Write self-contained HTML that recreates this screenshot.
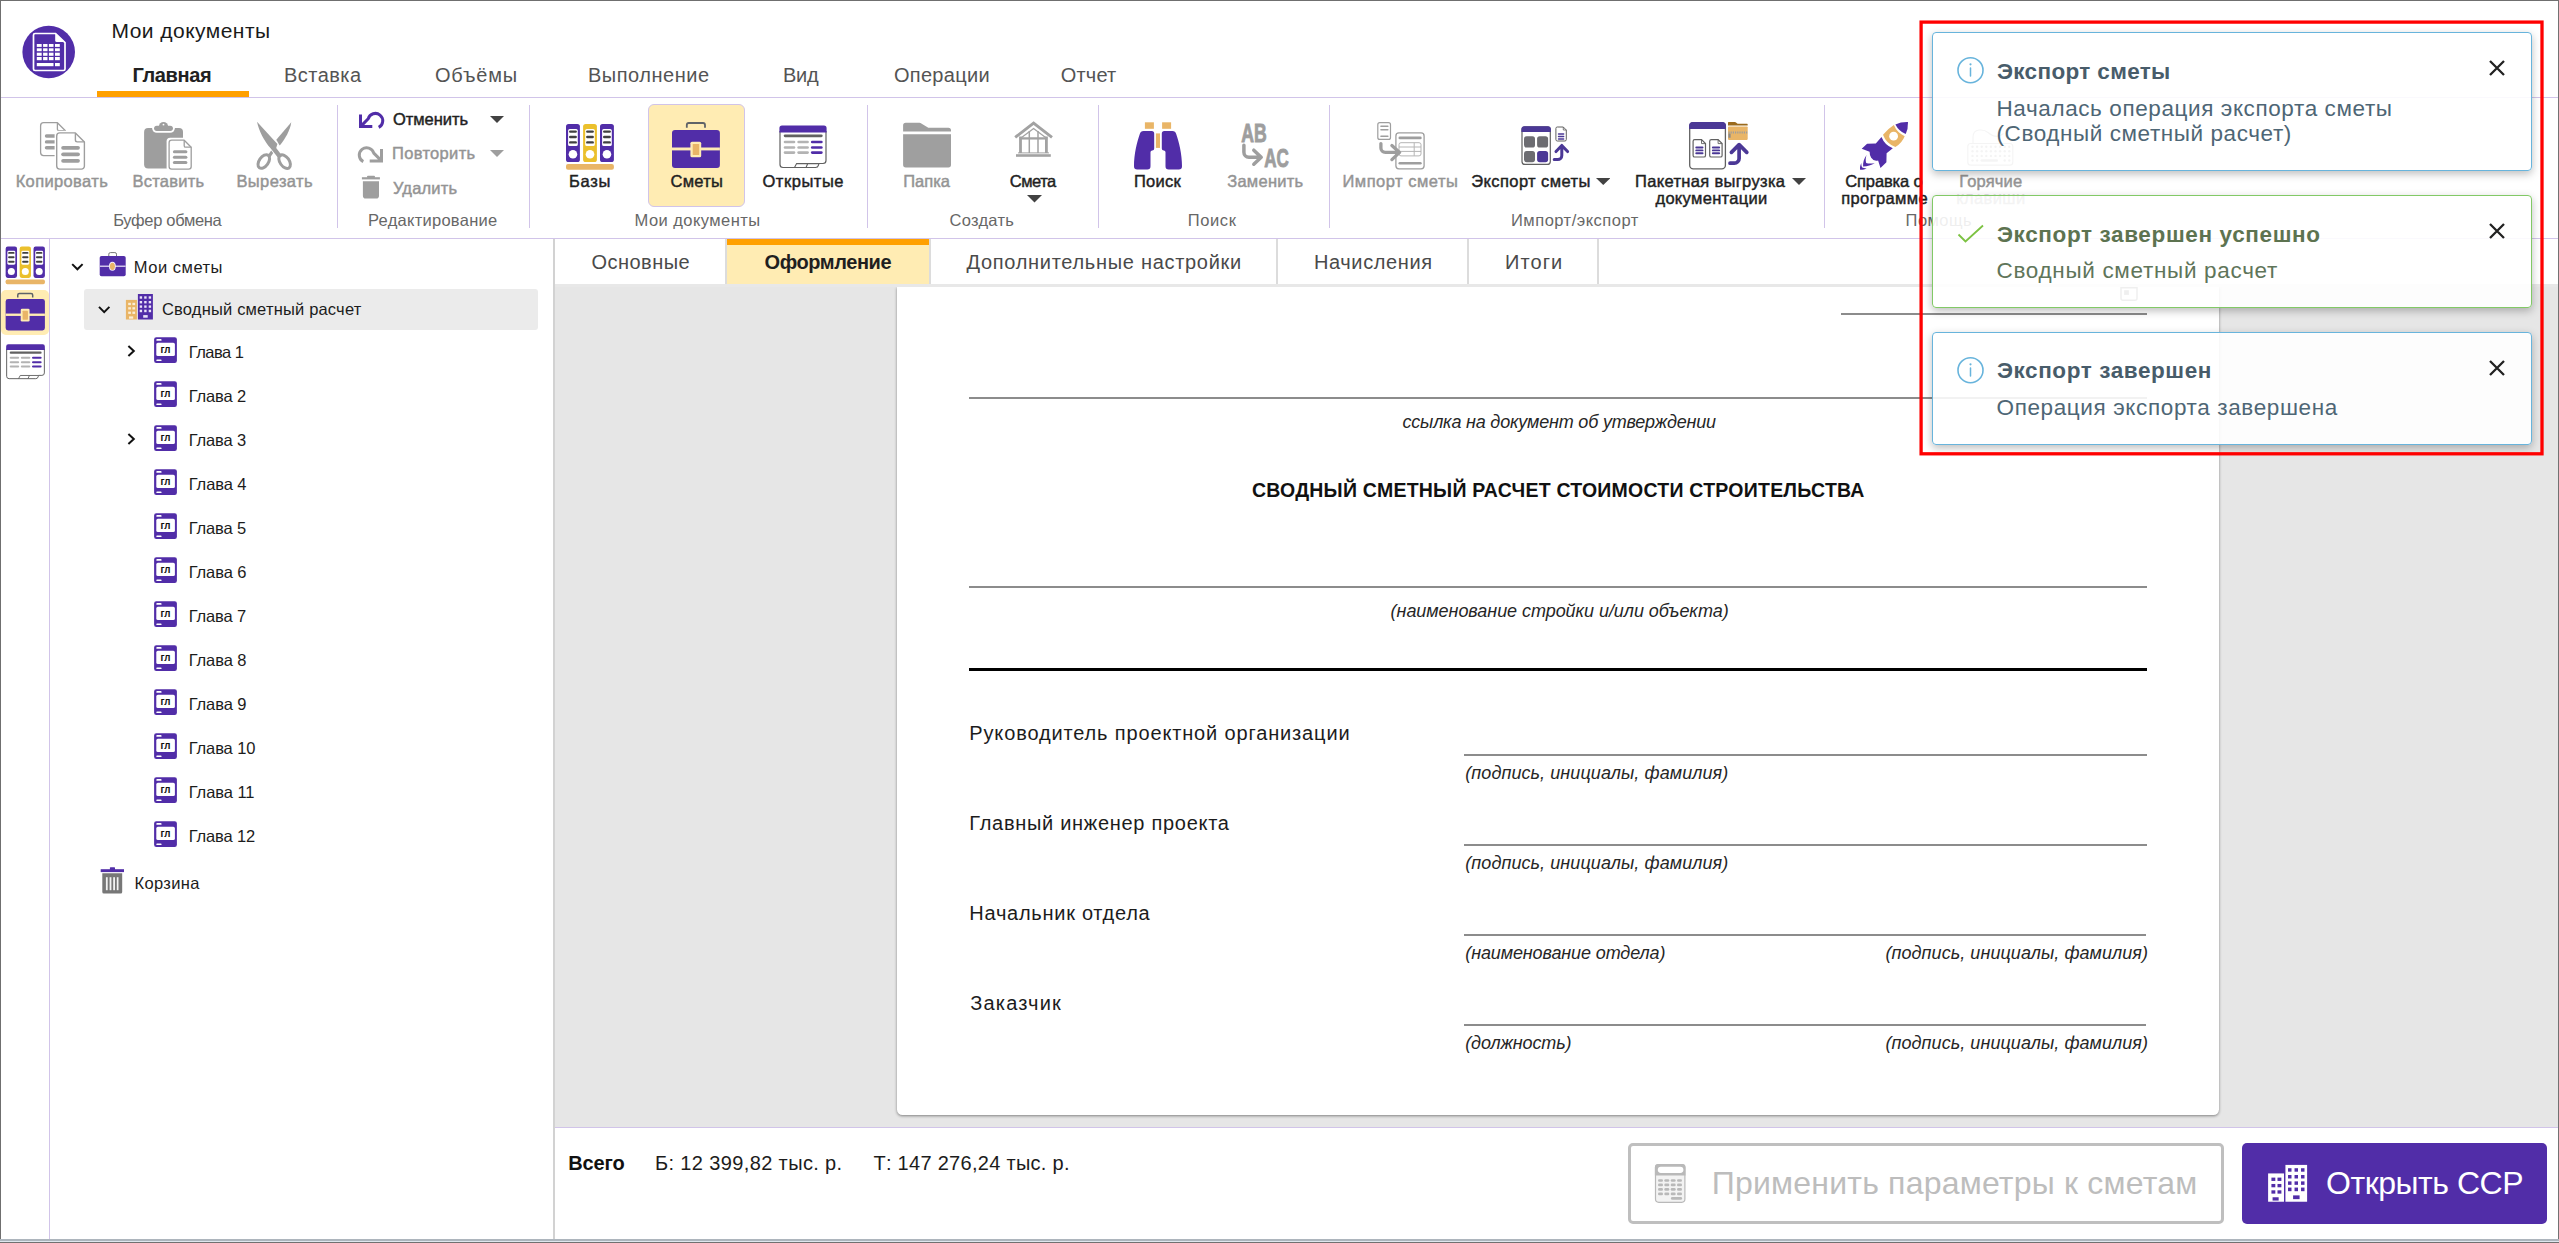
<!DOCTYPE html>
<html lang="ru"><head><meta charset="utf-8"><title>Мои документы</title>
<style>
html,body{margin:0;padding:0;}
body{width:2559px;height:1243px;position:relative;overflow:hidden;background:#fff;font-family:"Liberation Sans", sans-serif;}
.t{position:absolute;white-space:nowrap;line-height:1;}
</style></head><body>
<div style="position:absolute;left:97px;top:91px;width:152px;height:6px;background:#FFA000;"></div>
<div style="position:absolute;left:1px;top:97px;width:2557px;height:1px;background:#D1C4E9;"></div>
<div style="position:absolute;left:1px;top:238px;width:2557px;height:1px;background:#D1C4E9;"></div>
<div style="position:absolute;left:337px;top:105px;width:1px;height:123px;background:#D1C4E9;"></div>
<div style="position:absolute;left:529px;top:105px;width:1px;height:123px;background:#D1C4E9;"></div>
<div style="position:absolute;left:867px;top:105px;width:1px;height:123px;background:#D1C4E9;"></div>
<div style="position:absolute;left:1098px;top:105px;width:1px;height:123px;background:#D1C4E9;"></div>
<div style="position:absolute;left:1329px;top:105px;width:1px;height:123px;background:#D1C4E9;"></div>
<div style="position:absolute;left:1824px;top:105px;width:1px;height:123px;background:#D1C4E9;"></div>
<div style="position:absolute;left:648px;top:104px;width:97px;height:103px;background:#FFECB3;border:1px solid #D1C4E9;border-radius:6px;box-sizing:border-box;"></div>
<div style="position:absolute;left:49px;top:239px;width:1px;height:1000px;background:#D1C4E9;"></div>
<div style="position:absolute;left:1px;top:290px;width:48px;height:45px;background:#FFECB3;border-radius:5px;"></div>
<div style="position:absolute;left:553px;top:239px;width:2px;height:1000px;background:#d2d2d2;"></div>
<div style="position:absolute;left:84px;top:289px;width:454px;height:41px;background:#ebebeb;border-radius:3px;"></div>
<div style="position:absolute;left:555px;top:239px;width:2003px;height:45px;background:#fff;"></div>
<div style="position:absolute;left:727px;top:239px;width:202px;height:45px;background:#FFECB3;"></div>
<div style="position:absolute;left:727px;top:239px;width:202px;height:6px;background:#FFA000;"></div>
<div style="position:absolute;left:725px;top:239px;width:2px;height:45px;background:#dcdcdc;"></div>
<div style="position:absolute;left:929px;top:239px;width:2px;height:45px;background:#dcdcdc;"></div>
<div style="position:absolute;left:1276px;top:239px;width:2px;height:45px;background:#dcdcdc;"></div>
<div style="position:absolute;left:1467px;top:239px;width:2px;height:45px;background:#dcdcdc;"></div>
<div style="position:absolute;left:1597px;top:239px;width:2px;height:45px;background:#dcdcdc;"></div>
<div style="position:absolute;left:555px;top:284px;width:2003px;height:844px;background:#e6e6e6;"></div>
<div style="position:absolute;left:555px;top:284px;width:2003px;height:3px;background:#e8e8e8;"></div>
<div style="position:absolute;left:897px;top:287px;width:1322px;height:828px;background:#fff;border-radius:0 0 5.5px 5.5px;box-shadow:0 1px 3px rgba(0,0,0,.45);"></div>
<div style="position:absolute;left:555px;top:284px;width:2003px;height:3px;background:#e8e8e8;"></div>
<div style="position:absolute;left:1841px;top:313px;width:306px;height:2px;background:#8c8c8c;"></div>
<div style="position:absolute;left:969px;top:397px;width:1178px;height:2px;background:#8c8c8c;"></div>
<div style="position:absolute;left:969px;top:586px;width:1178px;height:2px;background:#8c8c8c;"></div>
<div style="position:absolute;left:969px;top:668px;width:1178px;height:3px;background:#000;"></div>
<div style="position:absolute;left:1464px;top:754px;width:683px;height:2px;background:#8c8c8c;"></div>
<div style="position:absolute;left:1464px;top:844px;width:683px;height:2px;background:#8c8c8c;"></div>
<div style="position:absolute;left:1464px;top:934px;width:681.6px;height:2px;background:#8c8c8c;"></div>
<div style="position:absolute;left:1464px;top:1024px;width:681.6px;height:2px;background:#8c8c8c;"></div>
<div style="position:absolute;left:555px;top:1127px;width:2003px;height:1px;background:#D1C4E9;"></div>
<div style="position:absolute;left:555px;top:1128px;width:2003px;height:111px;background:#fff;"></div>
<div style="position:absolute;left:1628px;top:1143px;width:596px;height:81px;background:#fff;border:3px solid #bfbfbf;border-radius:5px;box-sizing:border-box;"></div>
<div style="position:absolute;left:2242px;top:1143px;width:305px;height:81px;background:#512DA8;border-radius:5px;"></div>
<svg style="position:absolute;left:490px;top:115.5px;" width="14" height="7.0" viewBox="0 0 14 7.0"><path d="M0 0H14L7.0 7.0Z" fill="#424242"/></svg>
<svg style="position:absolute;left:490px;top:149.5px;" width="14" height="7.0" viewBox="0 0 14 7.0"><path d="M0 0H14L7.0 7.0Z" fill="#9E9E9E"/></svg>
<svg style="position:absolute;left:1026.5px;top:195px;" width="15.0" height="7.5" viewBox="0 0 15.0 7.5"><path d="M0 0H15.0L7.5 7.5Z" fill="#424242"/></svg>
<svg style="position:absolute;left:1595.5px;top:178px;" width="14.5" height="7" viewBox="0 0 14.5 7"><path d="M0 0H14.5L7.25 7Z" fill="#424242"/></svg>
<svg style="position:absolute;left:1792px;top:178px;" width="14" height="7" viewBox="0 0 14 7"><path d="M0 0H14L7.0 7Z" fill="#424242"/></svg>
<svg style="position:absolute;left:2118px;top:285px;" width="22" height="18" viewBox="2118 285 22 18"><path d="M2121 287.7H2137V298.2a2 2 0 0 1-2 2H2123a2 2 0 0 1-2-2Z" fill="none" stroke="#6e6e6e" stroke-width="1.5"/><rect x="2124.1" y="290.2" width="4.8" height="4.7" fill="#707070"/></svg>
<svg style="position:absolute;left:20px;top:24px;" width="58" height="56" viewBox="20 24 58 56"><circle cx="48.7" cy="52" r="26.3" fill="#512DA8"/><path d="M35.1 33.5H55.6L65 42.6V68.9a1.6 1.6 0 0 1-1.6 1.6H35.1a1.6 1.6 0 0 1-1.6-1.6V35.1a1.6 1.6 0 0 1 1.6-1.6Z" fill="none" stroke="#fff" stroke-width="1.7"/><path d="M55.2 33.6V40.4a1.6 1.6 0 0 0 1.6 1.6H64.8Z" fill="#fff"/><rect x="36.80" y="44.00" width="4.90" height="2.90" rx="0" fill="#fff" /><rect x="36.80" y="48.30" width="4.90" height="2.90" rx="0" fill="#fff" /><rect x="36.80" y="52.70" width="4.90" height="3.10" rx="0" fill="#fff" /><rect x="36.80" y="57.00" width="4.90" height="3.20" rx="0" fill="#fff" /><rect x="43.10" y="44.00" width="4.40" height="2.90" rx="0" fill="#fff" /><rect x="43.10" y="48.30" width="4.40" height="2.90" rx="0" fill="#fff" /><rect x="43.10" y="52.70" width="4.40" height="3.10" rx="0" fill="#fff" /><rect x="43.10" y="57.00" width="4.40" height="3.20" rx="0" fill="#fff" /><rect x="48.90" y="44.00" width="4.60" height="2.90" rx="0" fill="#fff" /><rect x="48.90" y="48.30" width="4.60" height="2.90" rx="0" fill="#fff" /><rect x="48.90" y="52.70" width="4.60" height="3.10" rx="0" fill="#fff" /><rect x="48.90" y="57.00" width="4.60" height="3.20" rx="0" fill="#fff" /><rect x="55.00" y="44.00" width="4.80" height="2.90" rx="0" fill="#fff" /><rect x="55.00" y="48.30" width="4.80" height="2.90" rx="0" fill="#fff" /><rect x="55.00" y="52.70" width="4.80" height="3.10" rx="0" fill="#fff" /><rect x="55.00" y="57.00" width="4.80" height="3.20" rx="0" fill="#fff" /><rect x="36.80" y="63.00" width="16.70" height="3.20" rx="0" fill="#fff" /><rect x="55.00" y="63.00" width="4.80" height="3.20" rx="0" fill="#fff" /></svg>
<svg style="position:absolute;left:38px;top:120px;" width="50" height="52" viewBox="38 120 50 52"><path d="M43.6 122.7H57.400000000000006L65.4 130.7V152.6a3 3 0 0 1 -3 3H43.6a3 3 0 0 1 -3 -3V125.7a3 3 0 0 1 3 -3Z" fill="#fff" stroke="#9E9E9E" stroke-width="1.3" stroke-linejoin="round"/><path d="M57.400000000000006 122.7V128.89999999999998a1.7999999999999998 1.7999999999999998 0 0 0 1.7999999999999998 1.7999999999999998H65.4" fill="none" stroke="#9E9E9E" stroke-width="1.3" stroke-linejoin="round"/><rect x="44.80" y="134.30" width="15.20" height="3.40" rx="1.7" fill="#9E9E9E" /><rect x="44.80" y="140.20" width="15.20" height="3.40" rx="1.7" fill="#9E9E9E" /><rect x="44.80" y="146.10" width="15.20" height="3.40" rx="1.7" fill="#9E9E9E" /><rect x="54.60" y="130.80" width="31.90" height="40.40" rx="4" fill="#fff" /><path d="M59.7 132.9H75.4L84.4 141.9V166.1a3 3 0 0 1 -3 3H59.7a3 3 0 0 1 -3 -3V135.9a3 3 0 0 1 3 -3Z" fill="#fff" stroke="#9E9E9E" stroke-width="1.4" stroke-linejoin="round"/><path d="M75.4 132.9V140.1a1.7999999999999998 1.7999999999999998 0 0 0 1.7999999999999998 1.7999999999999998H84.4" fill="none" stroke="#9E9E9E" stroke-width="1.4" stroke-linejoin="round"/><rect x="61.20" y="145.95" width="18.70" height="3.70" rx="1.85" fill="#9E9E9E" /><rect x="61.20" y="152.45" width="18.70" height="3.70" rx="1.85" fill="#9E9E9E" /><rect x="61.20" y="158.95" width="18.70" height="3.70" rx="1.85" fill="#9E9E9E" /></svg>
<svg style="position:absolute;left:142px;top:120px;" width="53" height="52" viewBox="142 120 53 52"><rect x="144.10" y="128.00" width="38.90" height="40.60" rx="4" fill="#9E9E9E" /><rect x="152.2" y="123.8" width="22.6" height="9" rx="4.5" fill="#fff"/><path d="M158.9 126.5a4.6 4.6 0 0 1 9.2 0Z" fill="#9E9E9E"/><circle cx="163.5" cy="124.7" r="0.9" fill="#fff"/><rect x="154.10" y="125.70" width="18.80" height="5.20" rx="2.6" fill="#9E9E9E" /><rect x="166.60" y="137.70" width="26.90" height="33.80" rx="3.5" fill="#fff" /><path d="M171.7 140.2H184.2L191.2 147.2V166.6a2.6 2.6 0 0 1 -2.6 2.6H171.7a2.6 2.6 0 0 1 -2.6 -2.6V142.79999999999998a2.6 2.6 0 0 1 2.6 -2.6Z" fill="#fff" stroke="#9E9E9E" stroke-width="1.3" stroke-linejoin="round"/><path d="M184.2 140.2V145.64a1.56 1.56 0 0 0 1.56 1.56H191.2" fill="none" stroke="#9E9E9E" stroke-width="1.3" stroke-linejoin="round"/><rect x="172.90" y="150.30" width="14.50" height="3.00" rx="1.5" fill="#9E9E9E" /><rect x="172.90" y="155.70" width="14.50" height="3.00" rx="1.5" fill="#9E9E9E" /><rect x="172.90" y="160.90" width="14.50" height="3.00" rx="1.5" fill="#9E9E9E" /></svg>
<svg style="position:absolute;left:254px;top:120px;" width="41" height="52" viewBox="254 120 41 52"><path d="M257 121.8L277.4 144L276.2 148L282.3 156L278.6 158.6L270.6 148.3C264 141 259 131 257 121.8Z" fill="#9E9E9E"/><path d="M291.3 122.2C290.2 130 285.2 139 279.7 145.4L276.3 139.7Z" fill="#9E9E9E"/><path d="M271.2 150.4L267.6 155.6L270.2 157.4L273.2 153Z" fill="#9E9E9E"/><ellipse cx="263.8" cy="161.5" rx="4.6" ry="7.7" transform="rotate(35 263.8 161.5)" fill="none" stroke="#9E9E9E" stroke-width="3"/><ellipse cx="284.6" cy="161.6" rx="4.6" ry="7.7" transform="rotate(-35 284.6 161.6)" fill="none" stroke="#9E9E9E" stroke-width="3"/></svg>
<svg style="position:absolute;left:357px;top:110px;" width="29" height="21" viewBox="357 110 29 21"><path d="M360.5 114.6V126.6H372.3M360.5 126.6L368.2 118.8A7.4 7.4 0 1 1 378.7 127.4" fill="none" stroke="#512DA8" stroke-width="3"/></svg>
<svg style="position:absolute;left:357px;top:144px;" width="29" height="21" viewBox="357 144 29 21"><g transform="translate(742 34.3) scale(-1 1)"><path d="M360.5 114.6V126.6H372.3M360.5 126.6L368.2 118.8A7.4 7.4 0 1 1 378.7 127.4" fill="none" stroke="#9E9E9E" stroke-width="3"/></g></svg>
<svg style="position:absolute;left:360px;top:174px;" width="22" height="26" viewBox="360 174 22 26"><rect x="361.90" y="177.20" width="18.00" height="2.20" rx="0" fill="#9E9E9E" /><rect x="367.00" y="175.80" width="8.00" height="2.20" rx="1" fill="#9E9E9E" /><path d="M362.9 181.2H379V195.8a2.8 2.8 0 0 1-2.8 2.8H365.7a2.8 2.8 0 0 1-2.8-2.8Z" fill="#9E9E9E"/></svg>
<svg style="position:absolute;left:564px;top:122px;" width="52" height="50" viewBox="564 122 52 50"><rect x="566.00" y="123.90" width="13.90" height="38.20" rx="2.6" fill="#512DA8" /><rect x="568.10" y="129.00" width="9.70" height="17.00" rx="1.6" fill="#fff" /><rect x="569.00" y="130.40" width="7.90" height="2.40" rx="1.2" fill="#404040" /><rect x="569.00" y="135.80" width="7.90" height="2.40" rx="1.2" fill="#404040" /><rect x="569.00" y="141.20" width="7.90" height="2.40" rx="1.2" fill="#404040" /><circle cx="572.95" cy="154.2" r="4.3" fill="#fff"/><rect x="583.10" y="123.90" width="13.80" height="38.20" rx="2.6" fill="#EBC02C" /><rect x="585.20" y="129.00" width="9.60" height="17.00" rx="1.6" fill="#fff" /><rect x="586.10" y="130.40" width="7.80" height="2.40" rx="1.2" fill="#404040" /><rect x="586.10" y="135.80" width="7.80" height="2.40" rx="1.2" fill="#404040" /><rect x="586.10" y="141.20" width="7.80" height="2.40" rx="1.2" fill="#404040" /><circle cx="590.00" cy="154.2" r="4.3" fill="#fff"/><rect x="600.00" y="123.90" width="13.90" height="38.20" rx="2.6" fill="#512DA8" /><rect x="602.10" y="129.00" width="9.70" height="17.00" rx="1.6" fill="#fff" /><rect x="603.00" y="130.40" width="7.90" height="2.40" rx="1.2" fill="#404040" /><rect x="603.00" y="135.80" width="7.90" height="2.40" rx="1.2" fill="#404040" /><rect x="603.00" y="141.20" width="7.90" height="2.40" rx="1.2" fill="#404040" /><circle cx="606.95" cy="154.2" r="4.3" fill="#fff"/><rect x="566.00" y="164.10" width="47.90" height="5.70" rx="2" fill="#E9B567" /></svg>
<svg style="position:absolute;left:4.36px;top:244.6px;" width="42.64" height="41" viewBox="564 122 52 50"><rect x="566.00" y="123.90" width="13.90" height="38.20" rx="2.6" fill="#512DA8" /><rect x="568.10" y="129.00" width="9.70" height="17.00" rx="1.6" fill="#fff" /><rect x="569.00" y="130.40" width="7.90" height="2.40" rx="1.2" fill="#404040" /><rect x="569.00" y="135.80" width="7.90" height="2.40" rx="1.2" fill="#404040" /><rect x="569.00" y="141.20" width="7.90" height="2.40" rx="1.2" fill="#404040" /><circle cx="572.95" cy="154.2" r="4.3" fill="#fff"/><rect x="583.10" y="123.90" width="13.80" height="38.20" rx="2.6" fill="#EBC02C" /><rect x="585.20" y="129.00" width="9.60" height="17.00" rx="1.6" fill="#fff" /><rect x="586.10" y="130.40" width="7.80" height="2.40" rx="1.2" fill="#404040" /><rect x="586.10" y="135.80" width="7.80" height="2.40" rx="1.2" fill="#404040" /><rect x="586.10" y="141.20" width="7.80" height="2.40" rx="1.2" fill="#404040" /><circle cx="590.00" cy="154.2" r="4.3" fill="#fff"/><rect x="600.00" y="123.90" width="13.90" height="38.20" rx="2.6" fill="#512DA8" /><rect x="602.10" y="129.00" width="9.70" height="17.00" rx="1.6" fill="#fff" /><rect x="603.00" y="130.40" width="7.90" height="2.40" rx="1.2" fill="#404040" /><rect x="603.00" y="135.80" width="7.90" height="2.40" rx="1.2" fill="#404040" /><rect x="603.00" y="141.20" width="7.90" height="2.40" rx="1.2" fill="#404040" /><circle cx="606.95" cy="154.2" r="4.3" fill="#fff"/><rect x="566.00" y="164.10" width="47.90" height="5.70" rx="2" fill="#E9B567" /></svg>
<svg style="position:absolute;left:670px;top:120px;" width="52" height="50" viewBox="670 120 52 50"><path d="M686.8 127.8V125a2 2 0 0 1 2-2H703a2 2 0 0 1 2 2V127.8" fill="none" stroke="#5f6368" stroke-width="1.8"/><rect x="672.00" y="129.90" width="47.90" height="38.20" rx="3" fill="#512DA8" /><rect x="672.00" y="147.50" width="47.90" height="2.90" rx="0" fill="#FFECB3" /><rect x="690.40" y="141.70" width="10.80" height="15.60" rx="1.6" fill="#FFECB3" /><rect x="692.70" y="144.00" width="6.50" height="11.00" rx="0.6" fill="#E9B567" /></svg>
<svg style="position:absolute;left:4.36px;top:291.0px;" width="42.64" height="41" viewBox="670 120 52 50"><path d="M686.8 127.8V125a2 2 0 0 1 2-2H703a2 2 0 0 1 2 2V127.8" fill="none" stroke="#5f6368" stroke-width="1.8"/><rect x="672.00" y="129.90" width="47.90" height="38.20" rx="3" fill="#512DA8" /><rect x="672.00" y="147.50" width="47.90" height="2.90" rx="0" fill="#FFECB3" /><rect x="690.40" y="141.70" width="10.80" height="15.60" rx="1.6" fill="#FFECB3" /><rect x="692.70" y="144.00" width="6.50" height="11.00" rx="0.6" fill="#E9B567" /></svg>
<svg style="position:absolute;left:778px;top:124px;" width="50" height="46" viewBox="778 124 50 46"><path d="M780 131V164.5a3 3 0 0 0 3 3H815.5a3 3 0 0 0 2.9-2.2l0.5-1.8H823a3 3 0 0 0 3-3V131" fill="#fff" stroke="#616161" stroke-width="1.2"/><path d="M779.4 132.4V128.2a2.6 2.6 0 0 1 2.6-2.6H824a2.6 2.6 0 0 1 2.6 2.6V132.4Z" fill="#512DA8"/><rect x="783.70" y="134.40" width="39.00" height="2.80" rx="1.4" fill="#616161" /><rect x="783.70" y="140.70" width="11.60" height="2.60" rx="1.3" fill="#b3b3b3" /><rect x="797.30" y="140.70" width="11.60" height="2.60" rx="1.3" fill="#b3b3b3" /><rect x="810.90" y="140.70" width="11.80" height="2.60" rx="1.3" fill="#512DA8" /><rect x="783.70" y="146.20" width="11.60" height="2.60" rx="1.3" fill="#b3b3b3" /><rect x="797.30" y="146.20" width="11.60" height="2.60" rx="1.3" fill="#b3b3b3" /><rect x="810.90" y="146.20" width="11.80" height="2.60" rx="1.3" fill="#512DA8" /><rect x="783.70" y="151.30" width="11.60" height="2.60" rx="1.3" fill="#b3b3b3" /><rect x="797.30" y="151.30" width="11.60" height="2.60" rx="1.3" fill="#b3b3b3" /><rect x="810.90" y="151.30" width="11.80" height="2.60" rx="1.3" fill="#512DA8" /><path d="M794.5 167.5L796.6 163.6H818.9M806 167.5L807.8 163.6" fill="none" stroke="#616161" stroke-width="1.1"/></svg>
<svg style="position:absolute;left:4.85px;top:342.7px;" width="41" height="37.72" viewBox="778 124 50 46"><path d="M780 131V164.5a3 3 0 0 0 3 3H815.5a3 3 0 0 0 2.9-2.2l0.5-1.8H823a3 3 0 0 0 3-3V131" fill="#fff" stroke="#616161" stroke-width="1.2"/><path d="M779.4 132.4V128.2a2.6 2.6 0 0 1 2.6-2.6H824a2.6 2.6 0 0 1 2.6 2.6V132.4Z" fill="#512DA8"/><rect x="783.70" y="134.40" width="39.00" height="2.80" rx="1.4" fill="#616161" /><rect x="783.70" y="140.70" width="11.60" height="2.60" rx="1.3" fill="#b3b3b3" /><rect x="797.30" y="140.70" width="11.60" height="2.60" rx="1.3" fill="#b3b3b3" /><rect x="810.90" y="140.70" width="11.80" height="2.60" rx="1.3" fill="#512DA8" /><rect x="783.70" y="146.20" width="11.60" height="2.60" rx="1.3" fill="#b3b3b3" /><rect x="797.30" y="146.20" width="11.60" height="2.60" rx="1.3" fill="#b3b3b3" /><rect x="810.90" y="146.20" width="11.80" height="2.60" rx="1.3" fill="#512DA8" /><rect x="783.70" y="151.30" width="11.60" height="2.60" rx="1.3" fill="#b3b3b3" /><rect x="797.30" y="151.30" width="11.60" height="2.60" rx="1.3" fill="#b3b3b3" /><rect x="810.90" y="151.30" width="11.80" height="2.60" rx="1.3" fill="#512DA8" /><path d="M794.5 167.5L796.6 163.6H818.9M806 167.5L807.8 163.6" fill="none" stroke="#616161" stroke-width="1.1"/></svg>
<svg style="position:absolute;left:901px;top:120px;" width="52" height="50" viewBox="901 120 52 50"><path d="M903.1 131.6V125.4a2.6 2.6 0 0 1 2.6-2.6H919.5a3 3 0 0 1 1.8 0.6L927.5 127.2a3 3 0 0 0 1.8 0.5H948.4a2.6 2.6 0 0 1 2.6 2.6V131.6Z" fill="#9f9f9f"/><path d="M903.1 134.2H951V164.8a2.6 2.6 0 0 1-2.6 2.6H905.7a2.6 2.6 0 0 1-2.6-2.6Z" fill="#9f9f9f"/></svg>
<svg style="position:absolute;left:1012px;top:116px;" width="43" height="43" viewBox="1012 116 43 43"><path d="M1015.2 137.4L1033.6 123L1052 137.4" fill="none" stroke="#a2a2a2" stroke-width="2.9"/><path d="M1021.6 137.6L1033.6 128.6L1045.6 137.6" fill="none" stroke="#a2a2a2" stroke-width="1.3"/><path d="M1020.5 136.6V153M1046.4 136.6V153" fill="none" stroke="#a2a2a2" stroke-width="2.8"/><path d="M1019.7 138.4H1047.3" fill="none" stroke="#a2a2a2" stroke-width="2.3"/><path d="M1029.3 131V153M1038 131V153" fill="none" stroke="#a2a2a2" stroke-width="1.5"/><path d="M1018 152.9H1049" fill="none" stroke="#a2a2a2" stroke-width="1"/><rect x="1016.00" y="154.20" width="34.80" height="2.60" rx="0" fill="#a2a2a2" /></svg>
<svg style="position:absolute;left:1132px;top:120px;" width="52" height="52" viewBox="1132 120 52 52"><rect x="1144.90" y="122.30" width="9.00" height="6.50" rx="0" fill="#E9B567" /><rect x="1162.10" y="122.30" width="9.00" height="6.50" rx="0" fill="#E9B567" /><rect x="1155.90" y="133.40" width="4.10" height="14.50" rx="0" fill="#E9B567" /><path d="M1143.6 131H1151.7a2.5 2.5 0 0 1 2.5 2.5V148.6a2 2 0 0 1-2 2h0a1.7 1.7 0 0 0-1.7 1.7V166.3a3.2 3.2 0 0 1-3.2 3.2H1137.2a3.2 3.2 0 0 1-3.2-3.2C1134 154 1137 142 1139.8 134a4 4 0 0 1 3.8-3Z" fill="#512DA8"/><g transform="translate(2316 0) scale(-1 1)"><path d="M1143.6 131H1151.7a2.5 2.5 0 0 1 2.5 2.5V148.6a2 2 0 0 1-2 2h0a1.7 1.7 0 0 0-1.7 1.7V166.3a3.2 3.2 0 0 1-3.2 3.2H1137.2a3.2 3.2 0 0 1-3.2-3.2C1134 154 1137 142 1139.8 134a4 4 0 0 1 3.8-3Z" fill="#512DA8"/></g></svg>
<svg style="position:absolute;left:1238px;top:120px;" width="54" height="50" viewBox="1238 120 54 50"><text x="1241.2" y="141.6" font-family='"Liberation Sans", sans-serif' font-weight="700" font-size="26" fill="#9E9E9E" stroke="#9E9E9E" stroke-width="0.9" textLength="25.5" lengthAdjust="spacingAndGlyphs">AB</text><text x="1264.2" y="167.1" font-family='"Liberation Sans", sans-serif' font-weight="700" font-size="26" fill="#9E9E9E" stroke="#9E9E9E" stroke-width="0.9" textLength="24.6" lengthAdjust="spacingAndGlyphs">AC</text><path d="M1243.9 145.2V152.2a5 5 0 0 0 5 5H1260M1253.8 150.2L1261.2 157.2L1253.8 164.2" fill="none" stroke="#9E9E9E" stroke-width="3.5" stroke-linecap="round" stroke-linejoin="round"/></svg>
<svg style="position:absolute;left:1375px;top:120px;" width="52" height="52" viewBox="1375 120 52 52"><rect x="1377.8" y="122.7" width="12.7" height="16.7" rx="2" fill="#fff" stroke="#9E9E9E" stroke-width="1.2"/><rect x="1380.20" y="125.55" width="8.40" height="1.50" rx="0.75" fill="#9E9E9E" /><rect x="1380.20" y="129.05" width="8.40" height="1.50" rx="0.75" fill="#9E9E9E" /><rect x="1380.20" y="135.45" width="8.40" height="1.50" rx="0.75" fill="#9E9E9E" /><rect x="1395.9" y="132.9" width="28.2" height="35.9" rx="3" fill="#fff" stroke="#9E9E9E" stroke-width="1.3"/><rect x="1398.50" y="136.60" width="23.20" height="2.60" rx="1.3" fill="#9E9E9E" /><rect x="1398.50" y="162.00" width="23.20" height="2.60" rx="1.3" fill="#9E9E9E" /><rect x="1399" y="142.7" width="22" height="13.2" rx="2" fill="#fff" stroke="#b5b5b5" stroke-width="1"/><path d="M1399 147H1421M1399 151.4H1421M1414.2 142.7V155.9" fill="none" stroke="#b5b5b5" stroke-width="1"/><path d="M1380.9 143.6V148a4.4 4.4 0 0 0 4.4 4.4H1398M1391.9 145.5L1399.6 152.4L1391.9 159.6" fill="none" stroke="#9E9E9E" stroke-width="3.3" stroke-linecap="round" stroke-linejoin="round"/></svg>
<svg style="position:absolute;left:1519px;top:124px;" width="52" height="43" viewBox="1519 124 52 43"><rect x="1522" y="126.9" width="28.3" height="37.5" rx="3" fill="#fff" stroke="#616161" stroke-width="1.2"/><path d="M1521.4 131.9V129.3a3 3 0 0 1 3-3H1547.9a3 3 0 0 1 3 3V131.9Z" fill="#4B3896"/><rect x="1524.00" y="136.20" width="11.00" height="11.40" rx="2.6" fill="#6c6c71" /><rect x="1537.10" y="136.20" width="11.00" height="11.40" rx="2.6" fill="#6c6c71" /><rect x="1524.00" y="150.90" width="11.00" height="11.30" rx="2.6" fill="#6c6c71" /><rect x="1537.10" y="150.90" width="11.00" height="11.30" rx="2.6" fill="#4B3896" /><path d="M1557.3 127H1563.3L1566.3 130V139.6a1.4 1.4 0 0 1-1.4 1.4H1557.3a1.4 1.4 0 0 1-1.4-1.4V128.4a1.4 1.4 0 0 1 1.4-1.4Z" fill="#fff" stroke="#616161" stroke-width="1"/><path d="M1563.3 127V130H1566.3" fill="none" stroke="#616161" stroke-width="0.8"/><rect x="1557.80" y="133.25" width="6.60" height="1.50" rx="0.75" fill="#4B3896" /><rect x="1557.80" y="135.75" width="6.60" height="1.50" rx="0.75" fill="#4B3896" /><rect x="1557.80" y="138.15" width="6.60" height="1.50" rx="0.75" fill="#4B3896" /><path d="M1556 151.6L1561.8 145.4L1567.6 151.6M1561.8 146V155.6a4 4 0 0 1-4 4H1554.2" fill="none" stroke="#4B3896" stroke-width="3" stroke-linecap="round" stroke-linejoin="round"/></svg>
<svg style="position:absolute;left:1687px;top:120px;" width="63" height="51" viewBox="1687 120 63 51"><rect x="1689.7" y="122.6" width="35.7" height="46.2" rx="3.6" fill="#fff" stroke="#616161" stroke-width="1.3"/><path d="M1689.1 129.1V125.6a3.6 3.6 0 0 1 3.6-3.6H1722.4a3.6 3.6 0 0 1 3.6 3.6V129.1Z" fill="#4B3896"/><path d="M1694.6999999999998 139.6H1701.5L1705.5 143.6V155.4a1.6 1.6 0 0 1-1.6 1.6H1694.6999999999998a1.6 1.6 0 0 1-1.6-1.6V141.2a1.6 1.6 0 0 1 1.6-1.6Z" fill="#fff" stroke="#616161" stroke-width="1.2"/><path d="M1701.5 139.6V143.6H1705.5" fill="none" stroke="#616161" stroke-width="0.9"/><rect x="1695.30" y="146.55" width="8.20" height="1.90" rx="0.95" fill="#4B3896" /><rect x="1695.30" y="149.45" width="8.20" height="1.90" rx="0.95" fill="#4B3896" /><rect x="1695.30" y="152.25" width="8.20" height="1.90" rx="0.95" fill="#4B3896" /><path d="M1711.3 139.6H1718.1000000000001L1722.1000000000001 143.6V155.4a1.6 1.6 0 0 1-1.6 1.6H1711.3a1.6 1.6 0 0 1-1.6-1.6V141.2a1.6 1.6 0 0 1 1.6-1.6Z" fill="#fff" stroke="#616161" stroke-width="1.2"/><path d="M1718.1000000000001 139.6V143.6H1722.1000000000001" fill="none" stroke="#616161" stroke-width="0.9"/><rect x="1711.90" y="146.55" width="8.20" height="1.90" rx="0.95" fill="#4B3896" /><rect x="1711.90" y="149.45" width="8.20" height="1.90" rx="0.95" fill="#4B3896" /><rect x="1711.90" y="152.25" width="8.20" height="1.90" rx="0.95" fill="#4B3896" /><path d="M1728 125.6V122.6a0.6 0.6 0 0 1 0.6-0.6H1735a1.5 1.5 0 0 1 1 0.4L1737.6 123.8H1747.1a0.6 0.6 0 0 1 0.6 0.6V125.6Z" fill="#9a6a1c"/><rect x="1728.00" y="126.40" width="19.70" height="13.50" rx="0.8" fill="#E9B567" /><path d="M1728.4 132.5H1747.5" stroke="#9e9e9e" stroke-width="2.2" stroke-dasharray="1.2 1" fill="none"/><rect x="1728.40" y="133.60" width="2.20" height="4.20" rx="0.5" fill="#8a8a8a" /><path d="M1731.4 152.4L1739.1 144.6L1746.8 152.4M1739.1 145.5V158.4a4.8 4.8 0 0 1-4.8 4.8H1730" fill="none" stroke="#4B3896" stroke-width="3.7" stroke-linecap="round" stroke-linejoin="round"/></svg>
<svg style="position:absolute;left:1858px;top:120px;" width="52" height="52" viewBox="1858 120 52 52"><path d="M1895.4 124.4Q1901 121.8 1908 122Q1908.2 129 1905.7 134.1Q1898.8 131 1895.4 124.4Z" fill="#512DA8"/><path d="M1893.9 125.1Q1896.9 132.6 1904.7 136.2Q1902.1 142.9 1895.4 147Q1886.1 143.4 1883 134.7Q1887.7 129 1893.9 125.1Z" fill="#E9B567"/><circle cx="1893.6" cy="136.2" r="4.4" fill="#fff"/><path d="M1881.5 137Q1884.6 145 1892.8 148.3L1886.6 153.2L1886.4 162.2L1880.5 168.1L1878.1 160.4Q1873.5 161.5 1871.2 157.8Q1869.6 155.5 1869.6 151.7L1861.7 148.8L1867.1 143.7L1875.8 143.4Z" fill="#512DA8"/><path d="M1866.6 155C1864 158.5 1862.8 162.5 1863.1 166.6C1867.5 166.4 1871.5 165 1874.8 163C1871.5 163.8 1868.5 163.8 1866.2 163C1865.4 160.5 1865.6 157.8 1866.6 155Z" fill="#512DA8"/><path d="M1861.4 163C1860.2 165.2 1859.8 167.5 1860.1 169.7C1862.6 169.8 1864.9 169.3 1866.8 168.4C1865 168.5 1863.4 168.2 1862.2 167.6C1861.5 166.3 1861.2 164.7 1861.4 163Z" fill="#512DA8"/></svg>
<svg style="position:absolute;left:1965px;top:126px;" width="51" height="42" viewBox="1965 126 51 42"><rect x="1967.8" y="143.5" width="45" height="21.7" rx="3" fill="none" stroke="#9E9E9E" stroke-width="1.2"/><path d="M1973 143.5V137C1973 128 1984 129 1988 132.5C1992 136 1997 139 2003.5 133.5" fill="none" stroke="#9E9E9E" stroke-width="1.1"/><circle cx="1972.5" cy="146.7" r="1.2" fill="#9E9E9E"/><circle cx="1977.1" cy="146.7" r="1.2" fill="#9E9E9E"/><circle cx="1981.7" cy="146.7" r="1.2" fill="#9E9E9E"/><circle cx="1986.3" cy="146.7" r="1.2" fill="#9E9E9E"/><circle cx="1990.9" cy="146.7" r="1.2" fill="#9E9E9E"/><circle cx="1995.5" cy="146.7" r="1.2" fill="#9E9E9E"/><circle cx="2000.1" cy="146.7" r="1.2" fill="#9E9E9E"/><circle cx="2004.7" cy="146.7" r="1.2" fill="#9E9E9E"/><circle cx="2009.3" cy="146.7" r="1.2" fill="#9E9E9E"/><circle cx="1972.5" cy="151.3" r="1.2" fill="#9E9E9E"/><circle cx="1977.1" cy="151.3" r="1.2" fill="#9E9E9E"/><circle cx="1981.7" cy="151.3" r="1.2" fill="#9E9E9E"/><circle cx="1986.3" cy="151.3" r="1.2" fill="#9E9E9E"/><circle cx="1990.9" cy="151.3" r="1.2" fill="#9E9E9E"/><circle cx="1995.5" cy="151.3" r="1.2" fill="#9E9E9E"/><circle cx="2000.1" cy="151.3" r="1.2" fill="#9E9E9E"/><circle cx="2004.7" cy="151.3" r="1.2" fill="#9E9E9E"/><circle cx="2009.3" cy="151.3" r="1.2" fill="#9E9E9E"/><circle cx="1972.5" cy="155.9" r="1.2" fill="#9E9E9E"/><circle cx="1977.1" cy="155.9" r="1.2" fill="#9E9E9E"/><circle cx="1981.7" cy="155.9" r="1.2" fill="#9E9E9E"/><circle cx="1986.3" cy="155.9" r="1.2" fill="#9E9E9E"/><circle cx="1990.9" cy="155.9" r="1.2" fill="#9E9E9E"/><circle cx="1995.5" cy="155.9" r="1.2" fill="#9E9E9E"/><circle cx="2000.1" cy="155.9" r="1.2" fill="#9E9E9E"/><circle cx="2004.7" cy="155.9" r="1.2" fill="#9E9E9E"/><circle cx="2009.3" cy="155.9" r="1.2" fill="#9E9E9E"/><circle cx="1972.5" cy="160.5" r="1.2" fill="#9E9E9E"/><circle cx="1977.1" cy="160.5" r="1.2" fill="#9E9E9E"/><circle cx="2004.7" cy="160.5" r="1.2" fill="#9E9E9E"/><circle cx="2009.3" cy="160.5" r="1.2" fill="#9E9E9E"/><rect x="1980.50" y="159.30" width="17.50" height="2.40" rx="1.2" fill="#9E9E9E" /></svg>
<svg style="position:absolute;left:69px;top:260px;" width="16" height="12" viewBox="69 260 16 12"><path d="M72.2 264.09999999999997L77.4 269.3L82.60000000000001 264.09999999999997" fill="none" stroke="#111" stroke-width="2"/></svg>
<svg style="position:absolute;left:96px;top:303px;" width="16" height="12" viewBox="96 303 16 12"><path d="M99.0 306.9L104.2 312.1L109.4 306.9" fill="none" stroke="#111" stroke-width="2"/></svg>
<svg style="position:absolute;left:125px;top:343px;" width="12" height="16" viewBox="125 343 12 16"><path d="M128.4 346L133.79999999999998 351L128.4 356" fill="none" stroke="#111" stroke-width="2"/></svg>
<svg style="position:absolute;left:125px;top:431px;" width="12" height="16" viewBox="125 431 12 16"><path d="M128.4 434L133.79999999999998 439L128.4 444" fill="none" stroke="#111" stroke-width="2"/></svg>
<svg style="position:absolute;left:98px;top:250px;" width="30" height="28" viewBox="98 250 30 28"><path d="M108.8 256.4V254.2a1.6 1.6 0 0 1 1.6-1.6H114.9a1.6 1.6 0 0 1 1.6 1.6V256.4" fill="none" stroke="#757575" stroke-width="1"/><rect x="99.70" y="256.00" width="26.00" height="20.20" rx="1.8" fill="#512DA8" /><rect x="99.70" y="265.50" width="26.00" height="1.50" rx="0" fill="#cfc3ea" /><ellipse cx="112.4" cy="266.3" rx="3.4" ry="4.5" fill="#f3ecff"/><ellipse cx="112.4" cy="266.3" rx="2.5" ry="3.6" fill="#E9B567"/></svg>
<svg style="position:absolute;left:124px;top:292px;" width="31" height="29" viewBox="124 292 31 29"><rect x="125.90" y="299.90" width="11.00" height="19.60" fill="#E9B567"/><rect x="137.90" y="294.00" width="15.00" height="25.50" fill="#512DA8"/><rect x="128.20" y="302.80" width="2.70" height="2.30" fill="#fbeed6"/><rect x="128.20" y="307.20" width="2.70" height="2.30" fill="#fbeed6"/><rect x="128.20" y="311.60" width="2.70" height="2.30" fill="#fbeed6"/><rect x="132.40" y="302.80" width="2.70" height="2.30" fill="#fbeed6"/><rect x="132.40" y="307.20" width="2.70" height="2.30" fill="#fbeed6"/><rect x="132.40" y="311.60" width="2.70" height="2.30" fill="#fbeed6"/><rect x="129.00" y="316.40" width="4.20" height="2.30" fill="#fbeed6"/><rect x="139.70" y="296.30" width="2.40" height="2.40" fill="#e9e2f8"/><rect x="139.70" y="301.00" width="2.40" height="2.40" fill="#e9e2f8"/><rect x="139.70" y="305.40" width="2.40" height="2.40" fill="#e9e2f8"/><rect x="139.70" y="309.70" width="2.40" height="2.50" fill="#e9e2f8"/><rect x="144.20" y="296.30" width="2.40" height="2.40" fill="#e9e2f8"/><rect x="144.20" y="301.00" width="2.40" height="2.40" fill="#e9e2f8"/><rect x="144.20" y="305.40" width="2.40" height="2.40" fill="#e9e2f8"/><rect x="144.20" y="309.70" width="2.40" height="2.50" fill="#e9e2f8"/><rect x="148.70" y="296.30" width="2.40" height="2.40" fill="#e9e2f8"/><rect x="148.70" y="301.00" width="2.40" height="2.40" fill="#e9e2f8"/><rect x="148.70" y="305.40" width="2.40" height="2.40" fill="#e9e2f8"/><rect x="148.70" y="309.70" width="2.40" height="2.50" fill="#e9e2f8"/><rect x="143.20" y="315.10" width="4.50" height="2.60" fill="#e9e2f8"/></svg>
<svg style="position:absolute;left:2266px;top:1162px;" width="43" height="44" viewBox="2266 1162 43 44"><rect x="2268.10" y="1173.42" width="15.89" height="28.31" fill="#fff"/><rect x="2285.43" y="1164.90" width="21.67" height="36.83" fill="#fff"/><rect x="2271.42" y="1177.61" width="3.90" height="3.32" fill="#512DA8"/><rect x="2271.42" y="1183.97" width="3.90" height="3.32" fill="#512DA8"/><rect x="2271.42" y="1190.32" width="3.90" height="3.32" fill="#512DA8"/><rect x="2277.49" y="1177.61" width="3.90" height="3.32" fill="#512DA8"/><rect x="2277.49" y="1183.97" width="3.90" height="3.32" fill="#512DA8"/><rect x="2277.49" y="1190.32" width="3.90" height="3.32" fill="#512DA8"/><rect x="2272.58" y="1197.26" width="6.07" height="3.32" fill="#512DA8"/><rect x="2288.03" y="1168.22" width="3.47" height="3.47" fill="#512DA8"/><rect x="2288.03" y="1175.01" width="3.47" height="3.47" fill="#512DA8"/><rect x="2288.03" y="1181.37" width="3.47" height="3.47" fill="#512DA8"/><rect x="2288.03" y="1187.58" width="3.47" height="3.61" fill="#512DA8"/><rect x="2294.53" y="1168.22" width="3.47" height="3.47" fill="#512DA8"/><rect x="2294.53" y="1175.01" width="3.47" height="3.47" fill="#512DA8"/><rect x="2294.53" y="1181.37" width="3.47" height="3.47" fill="#512DA8"/><rect x="2294.53" y="1187.58" width="3.47" height="3.61" fill="#512DA8"/><rect x="2301.03" y="1168.22" width="3.47" height="3.47" fill="#512DA8"/><rect x="2301.03" y="1175.01" width="3.47" height="3.47" fill="#512DA8"/><rect x="2301.03" y="1181.37" width="3.47" height="3.47" fill="#512DA8"/><rect x="2301.03" y="1187.58" width="3.47" height="3.61" fill="#512DA8"/><rect x="2293.09" y="1195.38" width="6.50" height="3.76" fill="#512DA8"/></svg>
<svg style="position:absolute;left:153px;top:336px;" width="25" height="28" viewBox="153 336 25 28"><rect x="154.10" y="337.20" width="22.80" height="25.70" rx="2.2" fill="#512DA8" /><rect x="156.30" y="342.80" width="18.60" height="13.20" rx="1.6" fill="#fff" /><rect x="156.30" y="339.10" width="5.30" height="1.70" rx="0.85" fill="#fff" /><rect x="156.30" y="359.40" width="5.30" height="1.70" rx="0.85" fill="#fff" /><text x="160.4" y="352.8" font-family='"Liberation Sans", sans-serif' font-weight="700" font-size="10.8" fill="#111" textLength="10" lengthAdjust="spacingAndGlyphs">гл</text></svg>
<svg style="position:absolute;left:153px;top:380px;" width="25" height="28" viewBox="153 380 25 28"><rect x="154.10" y="381.20" width="22.80" height="25.70" rx="2.2" fill="#512DA8" /><rect x="156.30" y="386.80" width="18.60" height="13.20" rx="1.6" fill="#fff" /><rect x="156.30" y="383.10" width="5.30" height="1.70" rx="0.85" fill="#fff" /><rect x="156.30" y="403.40" width="5.30" height="1.70" rx="0.85" fill="#fff" /><text x="160.4" y="396.8" font-family='"Liberation Sans", sans-serif' font-weight="700" font-size="10.8" fill="#111" textLength="10" lengthAdjust="spacingAndGlyphs">гл</text></svg>
<svg style="position:absolute;left:153px;top:424px;" width="25" height="28" viewBox="153 424 25 28"><rect x="154.10" y="425.20" width="22.80" height="25.70" rx="2.2" fill="#512DA8" /><rect x="156.30" y="430.80" width="18.60" height="13.20" rx="1.6" fill="#fff" /><rect x="156.30" y="427.10" width="5.30" height="1.70" rx="0.85" fill="#fff" /><rect x="156.30" y="447.40" width="5.30" height="1.70" rx="0.85" fill="#fff" /><text x="160.4" y="440.8" font-family='"Liberation Sans", sans-serif' font-weight="700" font-size="10.8" fill="#111" textLength="10" lengthAdjust="spacingAndGlyphs">гл</text></svg>
<svg style="position:absolute;left:153px;top:468px;" width="25" height="28" viewBox="153 468 25 28"><rect x="154.10" y="469.20" width="22.80" height="25.70" rx="2.2" fill="#512DA8" /><rect x="156.30" y="474.80" width="18.60" height="13.20" rx="1.6" fill="#fff" /><rect x="156.30" y="471.10" width="5.30" height="1.70" rx="0.85" fill="#fff" /><rect x="156.30" y="491.40" width="5.30" height="1.70" rx="0.85" fill="#fff" /><text x="160.4" y="484.8" font-family='"Liberation Sans", sans-serif' font-weight="700" font-size="10.8" fill="#111" textLength="10" lengthAdjust="spacingAndGlyphs">гл</text></svg>
<svg style="position:absolute;left:153px;top:512px;" width="25" height="28" viewBox="153 512 25 28"><rect x="154.10" y="513.20" width="22.80" height="25.70" rx="2.2" fill="#512DA8" /><rect x="156.30" y="518.80" width="18.60" height="13.20" rx="1.6" fill="#fff" /><rect x="156.30" y="515.10" width="5.30" height="1.70" rx="0.85" fill="#fff" /><rect x="156.30" y="535.40" width="5.30" height="1.70" rx="0.85" fill="#fff" /><text x="160.4" y="528.8" font-family='"Liberation Sans", sans-serif' font-weight="700" font-size="10.8" fill="#111" textLength="10" lengthAdjust="spacingAndGlyphs">гл</text></svg>
<svg style="position:absolute;left:153px;top:556px;" width="25" height="28" viewBox="153 556 25 28"><rect x="154.10" y="557.20" width="22.80" height="25.70" rx="2.2" fill="#512DA8" /><rect x="156.30" y="562.80" width="18.60" height="13.20" rx="1.6" fill="#fff" /><rect x="156.30" y="559.10" width="5.30" height="1.70" rx="0.85" fill="#fff" /><rect x="156.30" y="579.40" width="5.30" height="1.70" rx="0.85" fill="#fff" /><text x="160.4" y="572.8" font-family='"Liberation Sans", sans-serif' font-weight="700" font-size="10.8" fill="#111" textLength="10" lengthAdjust="spacingAndGlyphs">гл</text></svg>
<svg style="position:absolute;left:153px;top:600px;" width="25" height="28" viewBox="153 600 25 28"><rect x="154.10" y="601.20" width="22.80" height="25.70" rx="2.2" fill="#512DA8" /><rect x="156.30" y="606.80" width="18.60" height="13.20" rx="1.6" fill="#fff" /><rect x="156.30" y="603.10" width="5.30" height="1.70" rx="0.85" fill="#fff" /><rect x="156.30" y="623.40" width="5.30" height="1.70" rx="0.85" fill="#fff" /><text x="160.4" y="616.8" font-family='"Liberation Sans", sans-serif' font-weight="700" font-size="10.8" fill="#111" textLength="10" lengthAdjust="spacingAndGlyphs">гл</text></svg>
<svg style="position:absolute;left:153px;top:644px;" width="25" height="28" viewBox="153 644 25 28"><rect x="154.10" y="645.20" width="22.80" height="25.70" rx="2.2" fill="#512DA8" /><rect x="156.30" y="650.80" width="18.60" height="13.20" rx="1.6" fill="#fff" /><rect x="156.30" y="647.10" width="5.30" height="1.70" rx="0.85" fill="#fff" /><rect x="156.30" y="667.40" width="5.30" height="1.70" rx="0.85" fill="#fff" /><text x="160.4" y="660.8" font-family='"Liberation Sans", sans-serif' font-weight="700" font-size="10.8" fill="#111" textLength="10" lengthAdjust="spacingAndGlyphs">гл</text></svg>
<svg style="position:absolute;left:153px;top:688px;" width="25" height="28" viewBox="153 688 25 28"><rect x="154.10" y="689.20" width="22.80" height="25.70" rx="2.2" fill="#512DA8" /><rect x="156.30" y="694.80" width="18.60" height="13.20" rx="1.6" fill="#fff" /><rect x="156.30" y="691.10" width="5.30" height="1.70" rx="0.85" fill="#fff" /><rect x="156.30" y="711.40" width="5.30" height="1.70" rx="0.85" fill="#fff" /><text x="160.4" y="704.8" font-family='"Liberation Sans", sans-serif' font-weight="700" font-size="10.8" fill="#111" textLength="10" lengthAdjust="spacingAndGlyphs">гл</text></svg>
<svg style="position:absolute;left:153px;top:732px;" width="25" height="28" viewBox="153 732 25 28"><rect x="154.10" y="733.20" width="22.80" height="25.70" rx="2.2" fill="#512DA8" /><rect x="156.30" y="738.80" width="18.60" height="13.20" rx="1.6" fill="#fff" /><rect x="156.30" y="735.10" width="5.30" height="1.70" rx="0.85" fill="#fff" /><rect x="156.30" y="755.40" width="5.30" height="1.70" rx="0.85" fill="#fff" /><text x="160.4" y="748.8" font-family='"Liberation Sans", sans-serif' font-weight="700" font-size="10.8" fill="#111" textLength="10" lengthAdjust="spacingAndGlyphs">гл</text></svg>
<svg style="position:absolute;left:153px;top:776px;" width="25" height="28" viewBox="153 776 25 28"><rect x="154.10" y="777.20" width="22.80" height="25.70" rx="2.2" fill="#512DA8" /><rect x="156.30" y="782.80" width="18.60" height="13.20" rx="1.6" fill="#fff" /><rect x="156.30" y="779.10" width="5.30" height="1.70" rx="0.85" fill="#fff" /><rect x="156.30" y="799.40" width="5.30" height="1.70" rx="0.85" fill="#fff" /><text x="160.4" y="792.8" font-family='"Liberation Sans", sans-serif' font-weight="700" font-size="10.8" fill="#111" textLength="10" lengthAdjust="spacingAndGlyphs">гл</text></svg>
<svg style="position:absolute;left:153px;top:820px;" width="25" height="28" viewBox="153 820 25 28"><rect x="154.10" y="821.20" width="22.80" height="25.70" rx="2.2" fill="#512DA8" /><rect x="156.30" y="826.80" width="18.60" height="13.20" rx="1.6" fill="#fff" /><rect x="156.30" y="823.10" width="5.30" height="1.70" rx="0.85" fill="#fff" /><rect x="156.30" y="843.40" width="5.30" height="1.70" rx="0.85" fill="#fff" /><text x="160.4" y="836.8" font-family='"Liberation Sans", sans-serif' font-weight="700" font-size="10.8" fill="#111" textLength="10" lengthAdjust="spacingAndGlyphs">гл</text></svg>
<svg style="position:absolute;left:99px;top:866px;" width="27" height="29" viewBox="99 866 27 29"><rect x="100.70" y="869.20" width="23.30" height="2.90" rx="0" fill="#512DA8" /><rect x="109.90" y="867.20" width="5.10" height="2.80" rx="0.6" fill="#512DA8" /><path d="M102.3 873.2H122.2V892a1.5 1.5 0 0 1-1.5 1.5H103.8a1.5 1.5 0 0 1-1.5-1.5Z" fill="#777"/><rect x="105.90" y="877.20" width="1.80" height="13.00" rx="0" fill="#f2f2f2" /><rect x="109.60" y="877.20" width="1.80" height="13.00" rx="0" fill="#f2f2f2" /><rect x="113.20" y="877.20" width="1.80" height="13.00" rx="0" fill="#f2f2f2" /><rect x="116.80" y="877.20" width="1.70" height="13.00" rx="0" fill="#f2f2f2" /></svg>
<svg style="position:absolute;left:1653px;top:1162px;" width="35" height="43" viewBox="1653 1162 35 43"><rect x="1655.5" y="1164.6" width="29.4" height="37.7" rx="3.2" fill="#f3f3f3" stroke="#b9b9b9" stroke-width="1.2"/><path d="M1654.9 1175.6V1167.2a3.2 3.2 0 0 1 3.2-3.2H1682.3a3.2 3.2 0 0 1 3.2 3.2V1175.6Z" fill="#b9b9b9"/><rect x="1657.80" y="1166.70" width="25.60" height="6.30" rx="3.15" fill="#fff" /><rect x="1658.00" y="1179.20" width="5.00" height="2.60" rx="1.3" fill="#b9b9b9" /><rect x="1658.00" y="1183.60" width="5.00" height="2.60" rx="1.3" fill="#b9b9b9" /><rect x="1658.00" y="1188.10" width="5.00" height="2.60" rx="1.3" fill="#b9b9b9" /><rect x="1658.00" y="1192.60" width="5.00" height="2.60" rx="1.3" fill="#b9b9b9" /><rect x="1664.30" y="1179.20" width="5.00" height="2.60" rx="1.3" fill="#b9b9b9" /><rect x="1664.30" y="1183.60" width="5.00" height="2.60" rx="1.3" fill="#b9b9b9" /><rect x="1664.30" y="1188.10" width="5.00" height="2.60" rx="1.3" fill="#b9b9b9" /><rect x="1664.30" y="1192.60" width="5.00" height="2.60" rx="1.3" fill="#b9b9b9" /><rect x="1670.70" y="1179.20" width="5.00" height="2.60" rx="1.3" fill="#b9b9b9" /><rect x="1670.70" y="1183.60" width="5.00" height="2.60" rx="1.3" fill="#b9b9b9" /><rect x="1670.70" y="1188.10" width="5.00" height="2.60" rx="1.3" fill="#b9b9b9" /><rect x="1670.70" y="1192.60" width="5.00" height="2.60" rx="1.3" fill="#b9b9b9" /><rect x="1677.00" y="1179.20" width="5.00" height="2.60" rx="1.3" fill="#b9b9b9" /><rect x="1677.00" y="1183.60" width="5.00" height="2.60" rx="1.3" fill="#b9b9b9" /><rect x="1677.00" y="1188.10" width="5.00" height="2.60" rx="1.3" fill="#b9b9b9" /><rect x="1677.00" y="1192.60" width="5.00" height="2.60" rx="1.3" fill="#b9b9b9" /><rect x="1670.90" y="1197.00" width="11.20" height="2.80" rx="1.4" fill="#b9b9b9" /></svg>
<span class="t" style="left:111.50px;top:20.22px;font-size:21px;letter-spacing:0.465px;color:#1a1a1a;">Мои документы</span>
<span class="t" style="left:132.50px;top:65.07px;font-size:20px;letter-spacing:-0.361px;color:#212121;font-weight:700;">Главная</span>
<span class="t" style="left:284.00px;top:65.07px;font-size:20px;letter-spacing:0.465px;color:#545454;">Вставка</span>
<span class="t" style="left:435.00px;top:65.07px;font-size:20px;letter-spacing:0.796px;color:#545454;">Объёмы</span>
<span class="t" style="left:587.90px;top:65.07px;font-size:20px;letter-spacing:0.535px;color:#545454;">Выполнение</span>
<span class="t" style="left:783.00px;top:65.07px;font-size:20px;letter-spacing:-0.306px;color:#545454;">Вид</span>
<span class="t" style="left:893.90px;top:65.07px;font-size:20px;letter-spacing:0.302px;color:#545454;">Операции</span>
<span class="t" style="left:1060.80px;top:65.07px;font-size:20px;letter-spacing:0.151px;color:#545454;">Отчет</span>
<span class="t" style="left:15.65px;top:172.93px;font-size:16.5px;letter-spacing:0.362px;color:#949494;-webkit-text-stroke:0.45px currentColor;">Копировать</span>
<span class="t" style="left:132.55px;top:172.93px;font-size:16.5px;letter-spacing:0.222px;color:#949494;-webkit-text-stroke:0.45px currentColor;">Вставить</span>
<span class="t" style="left:236.45px;top:172.93px;font-size:16.5px;letter-spacing:0.401px;color:#949494;-webkit-text-stroke:0.45px currentColor;">Вырезать</span>
<span class="t" style="left:392.95px;top:110.53px;font-size:16.5px;letter-spacing:-0.028px;color:#1f1f1f;-webkit-text-stroke:0.45px currentColor;">Отменить</span>
<span class="t" style="left:391.95px;top:145.03px;font-size:16.5px;letter-spacing:0.333px;color:#949494;-webkit-text-stroke:0.45px currentColor;">Повторить</span>
<span class="t" style="left:392.95px;top:180.03px;font-size:16.5px;letter-spacing:0.200px;color:#949494;-webkit-text-stroke:0.45px currentColor;">Удалить</span>
<span class="t" style="left:568.95px;top:172.93px;font-size:16.5px;letter-spacing:0.738px;color:#1f1f1f;-webkit-text-stroke:0.45px currentColor;">Базы</span>
<span class="t" style="left:670.45px;top:172.93px;font-size:16.5px;letter-spacing:0.289px;color:#1f1f1f;-webkit-text-stroke:0.45px currentColor;">Сметы</span>
<span class="t" style="left:762.45px;top:172.93px;font-size:16.5px;letter-spacing:0.541px;color:#1f1f1f;-webkit-text-stroke:0.45px currentColor;">Открытые</span>
<span class="t" style="left:903.20px;top:172.93px;font-size:16.5px;letter-spacing:0.012px;color:#949494;-webkit-text-stroke:0.45px currentColor;">Папка</span>
<span class="t" style="left:1009.70px;top:172.93px;font-size:16.5px;letter-spacing:-0.478px;color:#1f1f1f;-webkit-text-stroke:0.45px currentColor;">Смета</span>
<span class="t" style="left:1133.95px;top:172.93px;font-size:16.5px;letter-spacing:0.274px;color:#1f1f1f;-webkit-text-stroke:0.45px currentColor;">Поиск</span>
<span class="t" style="left:1227.20px;top:172.93px;font-size:16.5px;letter-spacing:0.257px;color:#949494;-webkit-text-stroke:0.45px currentColor;">Заменить</span>
<span class="t" style="left:1342.45px;top:172.93px;font-size:16.5px;letter-spacing:0.505px;color:#949494;-webkit-text-stroke:0.45px currentColor;">Импорт сметы</span>
<span class="t" style="left:1471.20px;top:172.93px;font-size:16.5px;letter-spacing:0.416px;color:#1f1f1f;-webkit-text-stroke:0.45px currentColor;">Экспорт сметы</span>
<span class="t" style="left:1635.05px;top:172.93px;font-size:16.5px;letter-spacing:0.333px;color:#1f1f1f;-webkit-text-stroke:0.45px currentColor;">Пакетная выгрузка</span>
<span class="t" style="left:1655.45px;top:190.33px;font-size:16.5px;letter-spacing:0.316px;color:#1f1f1f;-webkit-text-stroke:0.45px currentColor;">документации</span>
<span class="t" style="left:1845.25px;top:172.93px;font-size:16.5px;letter-spacing:-0.126px;color:#1f1f1f;-webkit-text-stroke:0.45px currentColor;">Справка о</span>
<span class="t" style="left:1841.25px;top:190.33px;font-size:16.5px;letter-spacing:0.369px;color:#1f1f1f;-webkit-text-stroke:0.45px currentColor;">программе</span>
<span class="t" style="left:1959.25px;top:172.93px;font-size:16.5px;letter-spacing:0.159px;color:#949494;-webkit-text-stroke:0.45px currentColor;">Горячие</span>
<span class="t" style="left:1956.25px;top:190.33px;font-size:16.5px;letter-spacing:0.379px;color:#949494;-webkit-text-stroke:0.45px currentColor;">клавиши</span>
<span class="t" style="left:113.20px;top:211.93px;font-size:16.5px;letter-spacing:-0.322px;color:#676767;">Буфер обмена</span>
<span class="t" style="left:368.00px;top:211.93px;font-size:16.5px;letter-spacing:0.268px;color:#676767;">Редактирование</span>
<span class="t" style="left:634.50px;top:211.93px;font-size:16.5px;letter-spacing:0.448px;color:#676767;">Мои документы</span>
<span class="t" style="left:949.50px;top:211.93px;font-size:16.5px;letter-spacing:0.274px;color:#676767;">Создать</span>
<span class="t" style="left:1187.75px;top:211.93px;font-size:16.5px;letter-spacing:0.624px;color:#676767;">Поиск</span>
<span class="t" style="left:1511.00px;top:211.93px;font-size:16.5px;letter-spacing:0.499px;color:#676767;">Импорт/экспорт</span>
<span class="t" style="left:1905.60px;top:211.93px;font-size:16.5px;letter-spacing:0.454px;color:#676767;">Помощь</span>
<span class="t" style="left:133.80px;top:259.03px;font-size:16.5px;letter-spacing:0.514px;color:#1c1c1c;">Мои сметы</span>
<span class="t" style="left:162.00px;top:301.33px;font-size:16.5px;letter-spacing:0.181px;color:#1c1c1c;">Сводный сметный расчет</span>
<span class="t" style="left:188.70px;top:344.03px;font-size:16.5px;letter-spacing:-0.509px;color:#1c1c1c;">Глава 1</span>
<span class="t" style="left:188.70px;top:388.03px;font-size:16.5px;letter-spacing:-0.142px;color:#1c1c1c;">Глава 2</span>
<span class="t" style="left:188.70px;top:432.03px;font-size:16.5px;letter-spacing:-0.142px;color:#1c1c1c;">Глава 3</span>
<span class="t" style="left:188.70px;top:476.03px;font-size:16.5px;letter-spacing:-0.092px;color:#1c1c1c;">Глава 4</span>
<span class="t" style="left:188.70px;top:520.03px;font-size:16.5px;letter-spacing:-0.142px;color:#1c1c1c;">Глава 5</span>
<span class="t" style="left:188.70px;top:564.03px;font-size:16.5px;letter-spacing:-0.109px;color:#1c1c1c;">Глава 6</span>
<span class="t" style="left:188.70px;top:608.03px;font-size:16.5px;letter-spacing:-0.142px;color:#1c1c1c;">Глава 7</span>
<span class="t" style="left:188.70px;top:652.03px;font-size:16.5px;letter-spacing:-0.109px;color:#1c1c1c;">Глава 8</span>
<span class="t" style="left:188.70px;top:696.03px;font-size:16.5px;letter-spacing:-0.109px;color:#1c1c1c;">Глава 9</span>
<span class="t" style="left:188.70px;top:740.03px;font-size:16.5px;letter-spacing:-0.119px;color:#1c1c1c;">Глава 10</span>
<span class="t" style="left:188.70px;top:784.03px;font-size:16.5px;letter-spacing:-0.072px;color:#1c1c1c;">Глава 11</span>
<span class="t" style="left:188.70px;top:828.03px;font-size:16.5px;letter-spacing:-0.147px;color:#1c1c1c;">Глава 12</span>
<span class="t" style="left:134.50px;top:875.03px;font-size:16.5px;letter-spacing:0.338px;color:#1c1c1c;">Корзина</span>
<span class="t" style="left:591.60px;top:252.07px;font-size:20px;letter-spacing:0.447px;color:#4a4a4a;">Основные</span>
<span class="t" style="left:764.60px;top:252.07px;font-size:20px;letter-spacing:-0.433px;color:#1f1f1f;font-weight:700;">Оформление</span>
<span class="t" style="left:966.50px;top:252.07px;font-size:20px;letter-spacing:0.701px;color:#4a4a4a;">Дополнительные настройки</span>
<span class="t" style="left:1314.00px;top:252.07px;font-size:20px;letter-spacing:0.608px;color:#4a4a4a;">Начисления</span>
<span class="t" style="left:1505.00px;top:252.07px;font-size:20px;letter-spacing:1.068px;color:#4a4a4a;">Итоги</span>
<span class="t" style="left:1402.50px;top:412.51px;font-size:18px;letter-spacing:-0.195px;color:#262626;font-style:italic;">ссылка на документ об утверждении</span>
<span class="t" style="left:1251.90px;top:481.09px;font-size:19.5px;letter-spacing:0.234px;color:#111;font-weight:700;">СВОДНЫЙ СМЕТНЫЙ РАСЧЕТ СТОИМОСТИ СТРОИТЕЛЬСТВА</span>
<span class="t" style="left:1390.60px;top:601.66px;font-size:18px;letter-spacing:-0.051px;color:#262626;font-style:italic;">(наименование стройки и/или объекта)</span>
<span class="t" style="left:969.30px;top:722.87px;font-size:20px;letter-spacing:0.852px;color:#1c1c1c;">Руководитель проектной организации</span>
<span class="t" style="left:1465.25px;top:763.51px;font-size:18px;letter-spacing:0.079px;color:#262626;font-style:italic;">(подпись, инициалы, фамилия)</span>
<span class="t" style="left:969.30px;top:812.87px;font-size:20px;letter-spacing:0.707px;color:#1c1c1c;">Главный инженер проекта</span>
<span class="t" style="left:1465.25px;top:853.51px;font-size:18px;letter-spacing:0.079px;color:#262626;font-style:italic;">(подпись, инициалы, фамилия)</span>
<span class="t" style="left:969.30px;top:902.87px;font-size:20px;letter-spacing:0.736px;color:#1c1c1c;">Начальник отдела</span>
<span class="t" style="left:1465.25px;top:943.51px;font-size:18px;letter-spacing:-0.115px;color:#262626;font-style:italic;">(наименование отдела)</span>
<span class="t" style="left:1885.50px;top:943.51px;font-size:18px;letter-spacing:0.061px;color:#262626;font-style:italic;">(подпись, инициалы, фамилия)</span>
<span class="t" style="left:970.30px;top:992.87px;font-size:20px;letter-spacing:1.187px;color:#1c1c1c;">Заказчик</span>
<span class="t" style="left:1465.25px;top:1033.51px;font-size:18px;letter-spacing:-0.122px;color:#262626;font-style:italic;">(должность)</span>
<span class="t" style="left:1885.50px;top:1033.51px;font-size:18px;letter-spacing:0.061px;color:#262626;font-style:italic;">(подпись, инициалы, фамилия)</span>
<span class="t" style="left:568.20px;top:1153.07px;font-size:20px;letter-spacing:-0.089px;color:#111;font-weight:700;">Всего</span>
<span class="t" style="left:655.00px;top:1153.07px;font-size:20px;letter-spacing:0.372px;color:#1c1c1c;">Б: 12 399,82 тыс. р.</span>
<span class="t" style="left:873.40px;top:1153.07px;font-size:20px;letter-spacing:0.292px;color:#1c1c1c;">Т: 147 276,24 тыс. р.</span>
<span class="t" style="left:1711.80px;top:1166.71px;font-size:32px;letter-spacing:0.209px;color:#bdbdbd;">Применить параметры к сметам</span>
<span class="t" style="left:2326.00px;top:1166.71px;font-size:32px;letter-spacing:-0.458px;color:#fff;">Открыть ССР</span>
<div style="position:absolute;left:1932px;top:32px;width:600px;height:139px;background:rgba(255,255,255,0.89);border:1px solid #68b4dc;border-radius:4px;box-sizing:border-box;box-shadow:0 3px 9px rgba(0,0,0,.26);"></div>
<div style="position:absolute;left:1932px;top:195px;width:600px;height:113px;background:rgba(255,255,255,0.89);border:1px solid #82c966;border-radius:4px;box-sizing:border-box;box-shadow:0 3px 9px rgba(0,0,0,.26);"></div>
<div style="position:absolute;left:1932px;top:332px;width:600px;height:113px;background:rgba(255,255,255,0.89);border:1px solid #68b4dc;border-radius:4px;box-sizing:border-box;box-shadow:0 3px 9px rgba(0,0,0,.26);"></div>
<svg style="position:absolute;left:2489px;top:60px;" width="16" height="16" viewBox="0 0 16 16"><path d="M1 1L15 15M15 1L1 15" stroke="#222" stroke-width="2.3" fill="none"/></svg>
<svg style="position:absolute;left:2489px;top:222.5px;" width="16" height="16" viewBox="0 0 16 16"><path d="M1 1L15 15M15 1L1 15" stroke="#222" stroke-width="2.3" fill="none"/></svg>
<svg style="position:absolute;left:2489px;top:359.5px;" width="16" height="16" viewBox="0 0 16 16"><path d="M1 1L15 15M15 1L1 15" stroke="#222" stroke-width="2.3" fill="none"/></svg>
<svg style="position:absolute;left:1956px;top:56.3px;" width="28" height="28" viewBox="0 0 28 28"><circle cx="14.5" cy="14.2" r="12.5" fill="none" stroke="#68b4dc" stroke-width="1.6"/><circle cx="14.5" cy="8.3" r="1.1" fill="#68b4dc"/><rect x="13.75" y="11.2" width="1.5" height="9.5" rx="0.7" fill="#68b4dc"/></svg>
<svg style="position:absolute;left:1956px;top:356.3px;" width="28" height="28" viewBox="0 0 28 28"><circle cx="14.5" cy="14.2" r="12.5" fill="none" stroke="#68b4dc" stroke-width="1.6"/><circle cx="14.5" cy="8.3" r="1.1" fill="#68b4dc"/><rect x="13.75" y="11.2" width="1.5" height="9.5" rx="0.7" fill="#68b4dc"/></svg>
<svg style="position:absolute;left:1957px;top:224px;" width="28" height="20" viewBox="0 0 28 20"><path d="M1.5 10.5L8.5 17.5L26 1.5" fill="none" stroke="#7cc242" stroke-width="1.8"/></svg>
<span class="t" style="left:1996.90px;top:60.55px;font-size:22.5px;letter-spacing:0.356px;color:#485c6a;font-weight:700;">Экспорт сметы</span>
<span class="t" style="left:1996.50px;top:98.25px;font-size:22.5px;letter-spacing:0.602px;color:#4e6675;">Началась операция экспорта сметы</span>
<span class="t" style="left:1996.50px;top:123.15px;font-size:22.5px;letter-spacing:0.577px;color:#4e6675;">(Сводный сметный расчет)</span>
<span class="t" style="left:1996.90px;top:223.55px;font-size:22.5px;letter-spacing:0.637px;color:#5d7350;font-weight:700;">Экспорт завершен успешно</span>
<span class="t" style="left:1996.50px;top:259.95px;font-size:22.5px;letter-spacing:0.679px;color:#60755a;">Сводный сметный расчет</span>
<span class="t" style="left:1996.90px;top:360.45px;font-size:22.5px;letter-spacing:0.594px;color:#485c6a;font-weight:700;">Экспорт завершен</span>
<span class="t" style="left:1996.50px;top:397.15px;font-size:22.5px;letter-spacing:0.626px;color:#4e6675;">Операция экспорта завершена</span>
<svg style="position:absolute;left:1915px;top:16px;" width="634" height="445" viewBox="1915 16 634 445"><rect x="1921.1" y="22.1" width="620.9" height="431.7" fill="none" stroke="#ff0000" stroke-width="3.3"/></svg>
<div style="position:absolute;left:0px;top:0px;width:2559px;height:1px;background:#6f6f6f;"></div>
<div style="position:absolute;left:0px;top:0px;width:1px;height:1243px;background:#6f6f6f;"></div>
<div style="position:absolute;left:2558px;top:0px;width:1px;height:1243px;background:#727272;"></div>
<div style="position:absolute;left:0px;top:1239px;width:2559px;height:2px;background:#adb5bd;"></div>
<div style="position:absolute;left:0px;top:1241px;width:2559px;height:1px;background:#dfe6ee;"></div>
<div style="position:absolute;left:0px;top:1242px;width:2559px;height:1px;background:#707070;"></div>
</body></html>
